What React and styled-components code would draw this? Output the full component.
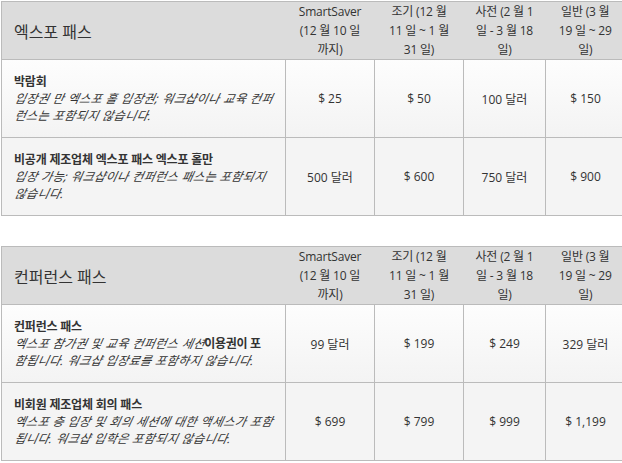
import styled, { createGlobalStyle } from "styled-components";

const GlobalStyle = createGlobalStyle`
    body{
        margin: 0;
        background: #fff;
        overflow: hidden;
        font-family: "Open Sans", "Noto Sans CJK KR", sans-serif;
        color: #333;
    }
`

const head = ['SmartSaver|(12 월 10 일|까지)', '조기 (12 월|11 일 ~ 1 월|31 일)', '사전 (2 월 1|일 - 3 월 18|일)', '일반 (3 월|19 일 ~ 29|일)']

const tables = [
    {
        title: '엑스포 패스',
        rows: [
            {
                name: '박람회',
                desc: [['입장권 만 엑스포 홀 입장권; 워크샵이나 교육 컨퍼'], ['런스는 포함되지 않습니다.']],
                prices: ['$ 25', '$ 50', '100 달러', '$ 150']
            },
            {
                name: '비공개 제조업체 엑스포 패스 엑스포 홀만',
                desc: [['입장 가능; 워크샵이나 컨퍼런스 패스는 포함되지'], ['않습니다.']],
                prices: ['500 달러', '$ 600', '750 달러', '$ 900']
            }
        ]
    },
    {
        title: '컨퍼런스 패스',
        rows: [
            {
                name: '컨퍼런스 패스',
                desc: [['엑스포 참가권 및 교육 컨퍼런스 세션', '이용권이 포'], ['함됩니다. 워크샵 입장료를 포함하지 않습니다.']],
                prices: ['99 달러', '$ 199', '$ 249', '329 달러']
            },
            {
                name: '비회원 제조업체 회의 패스',
                desc: [['엑스포 층 입장 및 회의 세션에 대한 액세스가 포함'], ['됩니다. 워크샵 입학은 포함되지 않습니다.']],
                prices: ['$ 699', '$ 799', '$ 999', '$ 1,199']
            }
        ]
    }
]

const PriceTable = ({data}) => (
    <Table>
        <colgroup>
            <col style={{width: 284}}/>
            <col style={{width: 89}}/>
            <col style={{width: 89}}/>
            <col style={{width: 82}}/>
            <col style={{width: 80}}/>
        </colgroup>
        <thead>
            <tr>
                <TitleCell>{data.title}</TitleCell>
                {head.map((h, index) =>
                    <HeadCell key={index}>
                        {h.split('|').map((line, i) => <Line key={i}>{line}</Line>)}
                    </HeadCell>
                )}
            </tr>
        </thead>
        <tbody>
            {data.rows.map((row, index) =>
                <Row key={index} $odd={index % 2 === 0}>
                    <NameCell>
                        <Name>{row.name}</Name>
                        {row.desc.map((line, i) =>
                            <Desc key={i}>
                                <Slant>{line[0]}</Slant>
                                {line[1] && <Strong>{line[1]}</Strong>}
                            </Desc>
                        )}
                    </NameCell>
                    {row.prices.map((p, i) => <Price key={i}>{p}</Price>)}
                </Row>
            )}
        </tbody>
    </Table>
)

export default function App(){
    return (
        <Page>
            <GlobalStyle />
            {tables.map((t, index) => <PriceTable key={index} data={t}/>)}
        </Page>
    )
}

const Page = styled.div`
    display: flex;
    flex-direction: column;
    gap: 30px;
    padding: 1px 0 0 1px;
    width: 640px;
`

const Table = styled.table`
    width: 624px;
    table-layout: fixed;
    border-collapse: collapse;
    border: 1px solid #bbb;
`

const TitleCell = styled.th`
    background: #dcdcdc;
    text-align: left;
    font-weight: 400;
    font-size: 16px;
    padding: 0 12px;
    height: 57px;
    border-bottom: 1px solid #bbb;
`

const HeadCell = styled.th`
    background: #dcdcdc;
    font-weight: 400;
    font-size: 12px;
    line-height: 19px;
    padding: 0;
    text-align: center;
    border-bottom: 1px solid #bbb;
    white-space: nowrap;
    letter-spacing: -0.2px;
`

const Line = styled.div``

const Row = styled.tr`
    background: ${p => p.$odd ? 'linear-gradient(#fdfdfd, #f3f3f3)' : '#f4f4f4'};
`

const NameCell = styled.td`
    border: 1px solid #bbb;
    padding: 13px 12px;
    font-size: 12px;
    line-height: 17px;
    height: 51px;
    vertical-align: middle;
`

const Name = styled.div`
    font-weight: 700;
    white-space: nowrap;
    letter-spacing: -0.2px;
`

const Desc = styled.div`
    white-space: nowrap;
    height: 17px;
`

const Slant = styled.span`
    display: inline-block;
    font-style: italic;
    letter-spacing: 0.45px;
    transform: skewX(-12deg);
    transform-origin: 0 75%;
`

const Strong = styled.span`
    font-weight: 700;
    letter-spacing: -0.3px;
`

const Price = styled.td`
    border: 1px solid #bbb;
    text-align: center;
    font-size: 12px;
    vertical-align: middle;
`
